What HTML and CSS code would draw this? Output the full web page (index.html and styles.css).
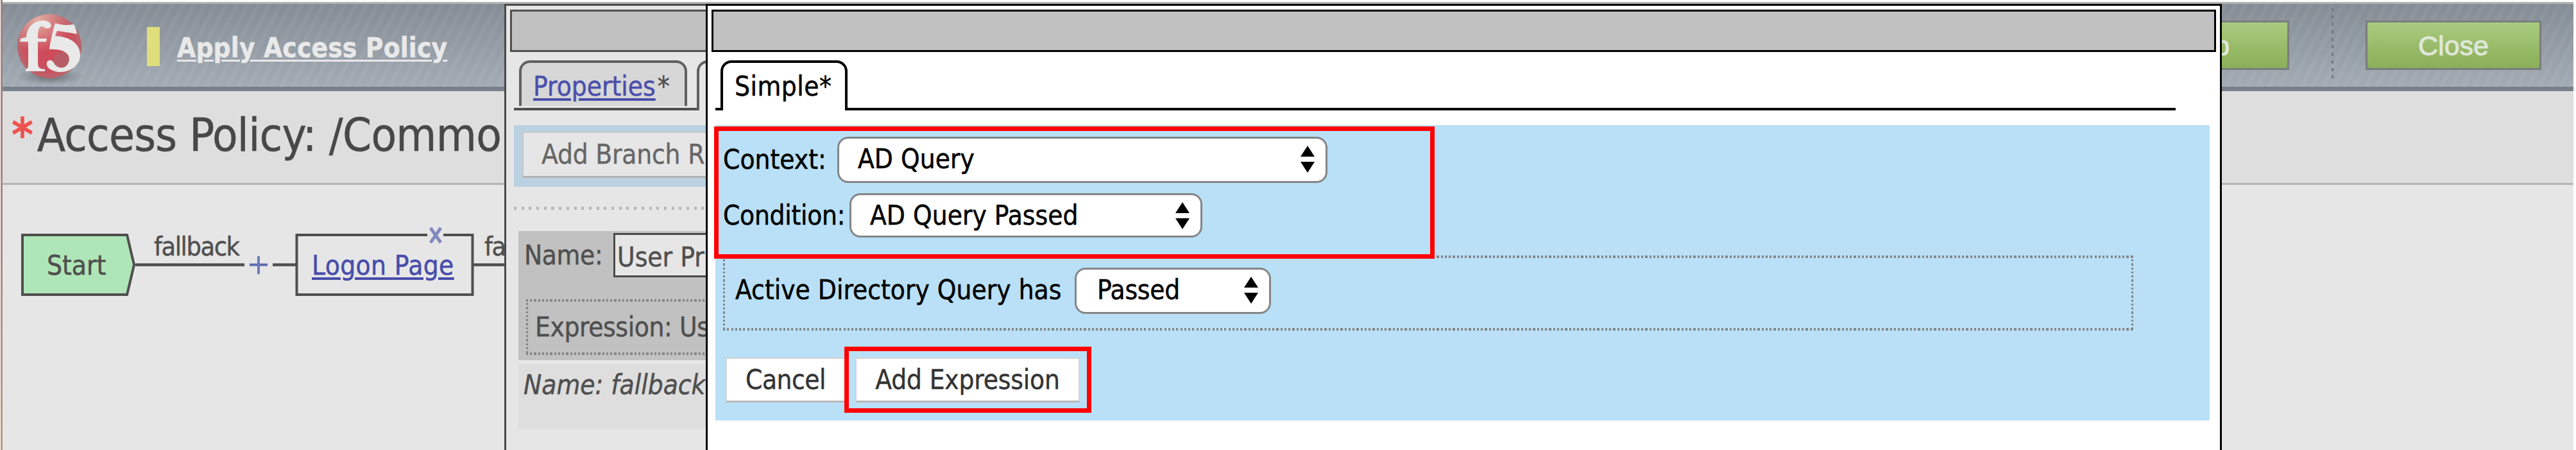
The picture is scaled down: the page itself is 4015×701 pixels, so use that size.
FILE: index.html
```
<!DOCTYPE html>
<html lang="en">
<head>
<meta charset="utf-8">
<title>Access Policy</title>
<link rel="stylesheet" href="styles.css">
</head>
<body>
<div class="page">
  <header class="topbar">
    <svg class="logo" viewBox="0 0 110 116">
      <defs>
        <radialGradient id="ball" cx="0.5" cy="0.5" r="0.52">
          <stop offset="0" stop-color="#cf4858"/><stop offset="0.75" stop-color="#cb5260"/><stop offset="1" stop-color="#b56a70"/>
        </radialGradient>
        <radialGradient id="shine" cx="0.32" cy="0.1" r="0.5">
          <stop offset="0" stop-color="#e6b5a8" stop-opacity="0.9"/><stop offset="1" stop-color="#e6b5a8" stop-opacity="0"/>
        </radialGradient>
        <radialGradient id="shade">
          <stop offset="0" stop-color="#5c646c"/><stop offset="1" stop-color="#7c848c" stop-opacity="0"/>
        </radialGradient>
      </defs>
      <ellipse cx="54" cy="99" rx="54" ry="14" fill="url(#shade)"/>
      <circle cx="53" cy="52" r="50" fill="url(#ball)"/>
      <circle cx="53" cy="52" r="50" fill="url(#shine)"/>
      <circle cx="74" cy="75" r="14" fill="#a8676b" opacity="0.6"/>
      <g fill="#e9e9e9">
        <path d="M8 40 L17 38 C18 22 29 11 45 12 C53 13 57 17 55 22 C52 26 46 24 42 21 C36 21 35 28 35 40 L49 40 L48 45 L35 45 L35 78 C35 86 38 87 46 88 L46 91 L16 91 L16 88 C20 87 20 84 20 78 L20 45 L7 45 Z"/>
        <path d="M62 16 C74 20 84 19 91 18 C94 23 95 28 96 33 C86 31 72 29 65 28 L62 36 C84 37 101 47 101 66 C101 82 84 94 66 92 C54 90 47 84 49 77 C52 72 57 73 60 78 C64 86 74 88 80 82 C89 72 84 55 53 57 C53 52 58 28 62 16 Z"/>
      </g>
    </svg>
    <span class="marker"></span>
    <a class="apply">Apply Access Policy</a>
    <div class="actions">
      <button class="green">Help</button>
      <span class="divider"></span>
      <button class="green">Close</button>
    </div>
  </header>
  <div class="title"><b>*</b>Access Policy: /Common</div>
  <main class="canvas">
    <svg class="wires" viewBox="0 0 800 413">
      <path d="M35 78 H198 L209 124.500 L198 171 H35 Z" fill="#afe6b8" stroke="#4f4f4f" stroke-width="4"/>
      <path d="M211 124.500 H381 M425 124.500 H461 M738 124.500 H800" stroke="#4f4f4f" stroke-width="4.500"/>
      <path d="M389 124.500 H417" stroke="#5a6cae" stroke-width="4"/>
      <path d="M403 111 V139" stroke="#6b7cb8" stroke-width="4"/>
      <rect x="462.500" y="78" width="274" height="93" fill="none" stroke="#4f4f4f" stroke-width="4"/>
      <rect x="666" y="72" width="25" height="12" fill="#e6e6e6"/>
      <path d="M671 67 L687 90 M687 67 L671 90" stroke="#8089bd" stroke-width="5"/>
    </svg>
    <span class="label start">Start</span>
    <span class="label edge first">fallback</span>
    <a class="label logon">Logon Page</a>
    <span class="label edge second">fa</span>
  </main>
</div>

<section class="window props">
  <div class="caption"></div>
  <nav class="tabs">
    <i class="line stub"></i>
    <div class="tab idle"><a>Properties</a>*</div>
    <div class="tab next"></div>
  </nav>
  <div class="bar"><button class="plain">Add Branch R</button></div>
  <div class="dots"></div>
  <div class="rule">
    <div class="namerow"><span>Name:</span><span class="input">User Pr</span></div>
    <div class="expr dotted">Expression: Us</div>
  </div>
  <div class="rule light">Name: fallback</div>
</section>

<section class="window simple">
  <div class="caption"></div>
  <nav class="tabs">
    <i class="line stub"></i>
    <div class="tab">Simple*</div>
    <i class="line rest"></i>
  </nav>
  <div class="panel">
    <div class="row"><span class="ctx">Context:</span><div class="select wide">AD Query<svg viewBox="0 0 22 42"><path d="M11 0 L22 17 H0 Z M0 25 H22 L11 42 Z"/></svg></div></div>
    <div class="row second"><span class="cond">Condition:</span><div class="select mid">AD Query Passed<svg viewBox="0 0 22 42"><path d="M11 0 L22 17 H0 Z M0 25 H22 L11 42 Z"/></svg></div></div>
    <div class="query dotted"><span>Active Directory Query has</span><div class="select small">Passed<svg viewBox="0 0 22 42"><path d="M11 0 L22 17 H0 Z M0 25 H22 L11 42 Z"/></svg></div></div>
    <div class="buttons"><button class="plain cancel">Cancel</button><button class="plain add">Add Expression</button></div>
  </div>
  <div class="mark mark-select"></div>
  <div class="mark mark-add"></div>
</section>
</body>
</html>
```

FILE: styles.css
```
* { box-sizing: border-box; }
body {
  margin: 0;
  width: 4015px;
  height: 701px;
  overflow: hidden;
  position: relative;
  background: #fff;
  color: #4f4f4f;
  font: 42px/50px "DejaVu Sans Condensed", "DejaVu Sans", sans-serif;
  -webkit-text-stroke: .5px currentColor;
}
button { font: inherit; padding: 0; margin: 0; border-radius: 0; -webkit-text-stroke: .4px currentColor; }
a { text-decoration: underline; text-decoration-thickness: 4px; text-underline-offset: 4px; }

.page {
  width: 4010px;
  height: 701px;
  margin-left: 1px;
  border-left: 3px solid;
  border-image: linear-gradient(#a08282, #ab8684 50%, #bd9a82) 1;
  padding-top: 3px;
  background: #e6e6e6;
  background-clip: content-box;
}
.topbar {
  height: 139px;
  display: flex;
  align-items: flex-start;
  border-top: 3px solid #b4b4b4;
  border-bottom: 7px solid #76818b;
  background:
    repeating-linear-gradient(117deg, rgba(255,255,255,0) 0 7px, rgba(255,255,255,.045) 9px 13px, rgba(255,255,255,0) 15px),
    linear-gradient(#848c95, #a3abb4);
}
.logo { width: 110px; height: 116px; margin: 14px 0 0 20px; }
.marker { width: 20px; height: 61px; margin: 36px 0 0 95px; background: #dede7c; }
.apply { margin: 44px 0 0 27px; font-weight: bold; color: #e9e9e9; text-decoration-thickness: 3px; letter-spacing: .15px; }
.actions { margin-left: auto; display: flex; padding-right: 50px; }
.green {
  width: 274px;
  height: 77px;
  margin-top: 26px;
  border: 3px solid #7a7d7d;
  background: linear-gradient(#aacb80, #98bb69 55%, #8aae59);
  color: #dfe7d8;
  font: 43px/68px "Liberation Sans", Arial, sans-serif;
  -webkit-text-stroke: 1px #dfe7d8;
}
.divider { width: 3px; height: 113px; margin: 6px 50px 0 66px; background: repeating-linear-gradient(#717982 0 5px, transparent 5px 11.7px); }
.title { width: 100%; height: 146px; padding: 26px 0 0 14px; border-bottom: 3px solid #b5b5b5; background: #dedede; font-size: 72px; line-height: 84px; letter-spacing: -.7px; white-space: nowrap; color: #484848; }
.title b { color: #ee5350; letter-spacing: 6px; }
.canvas { position: relative; width: 787px; height: 413px; margin-left: -4px; overflow: hidden; }
.wires { display: block; width: 800px; height: 413px; }
.label { position: absolute; top: 101px; }
.start { left: 73px; }
.logon { left: 486px; color: #474cab; letter-spacing: .4px; }
.edge { top: 71px; font-size: 41px; letter-spacing: -1.4px; }
.first { left: 240px; }
.second { left: 755px; }

.window { position: absolute; top: 6px; height: 710px; border: 3px solid; padding: 6px; overflow: hidden; white-space: nowrap; }
.props { left: 786px; width: 2363px; border-color: #4a4a4a; background: #e6e6e6; }
.simple { left: 1100px; width: 2363px; border-color: #000; background: #fff; color: #000; }
.caption { height: 66px; border: 3px solid; background: #c1c1c1; }
.tabs { display: flex; align-items: flex-end; height: 91px; padding-left: 6px; }
.line { height: 4px; background: #000; }
.props .line { background: #4f4f4f; }
.stub { width: 12px; margin-right: -4px; }
.tab { height: 78px; width: 198px; padding: 12px 0 0 18px; border: 4px solid; border-bottom: 0; border-radius: 17px 17px 0 0; letter-spacing: .5px; }
.rest { width: 2074px; margin-left: -4px; }
.props .stub { width: 288px; margin-right: -280px; }
.tab.idle { width: 262px; height: 71px; margin-bottom: 7px; background: #d7d7d7; border-color: #606060; letter-spacing: 0; word-spacing: 0; }
.tab.idle a { color: #4a4fab; margin-right: 3px; }
.tab.next { margin-left: 15px; border-color: #606060; }

.bar { height: 96px; margin: 23px 0 0 6px; padding: 10px 13px; background: #bad1e1; }
.plain { height: 70px; border: 2px solid #d3d3d3; border-bottom: 3px solid #b9b9b9; background: #fff; color: #333; letter-spacing: -.2px; }
.bar .plain { width: 420px; height: 72px; padding-left: 28px; text-align: left; border-color: #c6c6c6; border-bottom-color: #b3b3b3; background: #e6e6e6; color: #666; }
.dots { height: 5px; margin: 31px 0 0 6px; background: repeating-linear-gradient(90deg, #b9b9b9 0 4px, transparent 4px 11.7px); }
.dotted {
  --h: repeating-linear-gradient(90deg, #858585 0 3.2px, transparent 3.2px 6.25px);
  --v: repeating-linear-gradient(#858585 0 3.2px, transparent 3.2px 6.25px);
  background: var(--h) 0 0 / 100% 4px no-repeat, var(--h) 0 100% / 100% 4px no-repeat,
    var(--v) 0 0 / 3px 100% no-repeat, var(--v) 100% 0 / 3px 100% no-repeat;
}
.rule { height: 201px; margin: 33px 0 0 13px; padding: 3px 0 0 9px; background: #c1c1c1; }
.namerow { display: flex; height: 69px; }
.namerow > span:first-child { width: 139px; padding-top: 10px; letter-spacing: -.4px; }
.input { flex: 1; border: 3px solid #4a4a4a; background: #e6e6e6; padding: 10px 0 0 3px; }
.expr { height: 87px; margin: 34px 0 0 3px; padding: 19px 0 0 14px; letter-spacing: -.4px; }
.rule.light { height: 101px; margin-top: 6px; padding: 8px 0 0 8px; background: #dedede; font-style: italic; }

.panel { width: 2329px; height: 460px; margin: 23px 0 0 6px; padding: 18px 0 0 12px; background: #b9e0f7; }
.row { display: flex; height: 72px; align-items: center; }
.row.second { height: 69px; margin-top: 16px; }
.ctx { width: 178px; }
.cond { width: 197px; letter-spacing: -.3px; }
.select { position: relative; display: flex; align-items: center; justify-content: space-between; height: 100%; padding: 0 17px 2px 29px; border: 3px solid #858585; border-radius: 17px; background: #fff; }
.select svg { width: 22px; height: 42px; }
.wide { width: 764px; }
.mid { width: 550px; padding-bottom: 0; }
.small { width: 306px; height: 72px; padding-left: 32px; letter-spacing: -.3px; }
.query { display: flex; width: 2198px; height: 117px; margin: 28px 0 0; padding: 19px 0 0 19px; }
.query > span { width: 529px; padding-top: 10px; }
.buttons { display: flex; margin: 42px 0 0 4px; }
.cancel { width: 187px; margin-right: 15px; letter-spacing: -.5px; }
.add { width: 350px; }
.mark { position: absolute; border: 7px solid #f00; }
.mark-select { left: 10px; top: 188px; width: 1123px; height: 206px; }
.mark-add { left: 213px; top: 531px; width: 385px; height: 103px; }
```
